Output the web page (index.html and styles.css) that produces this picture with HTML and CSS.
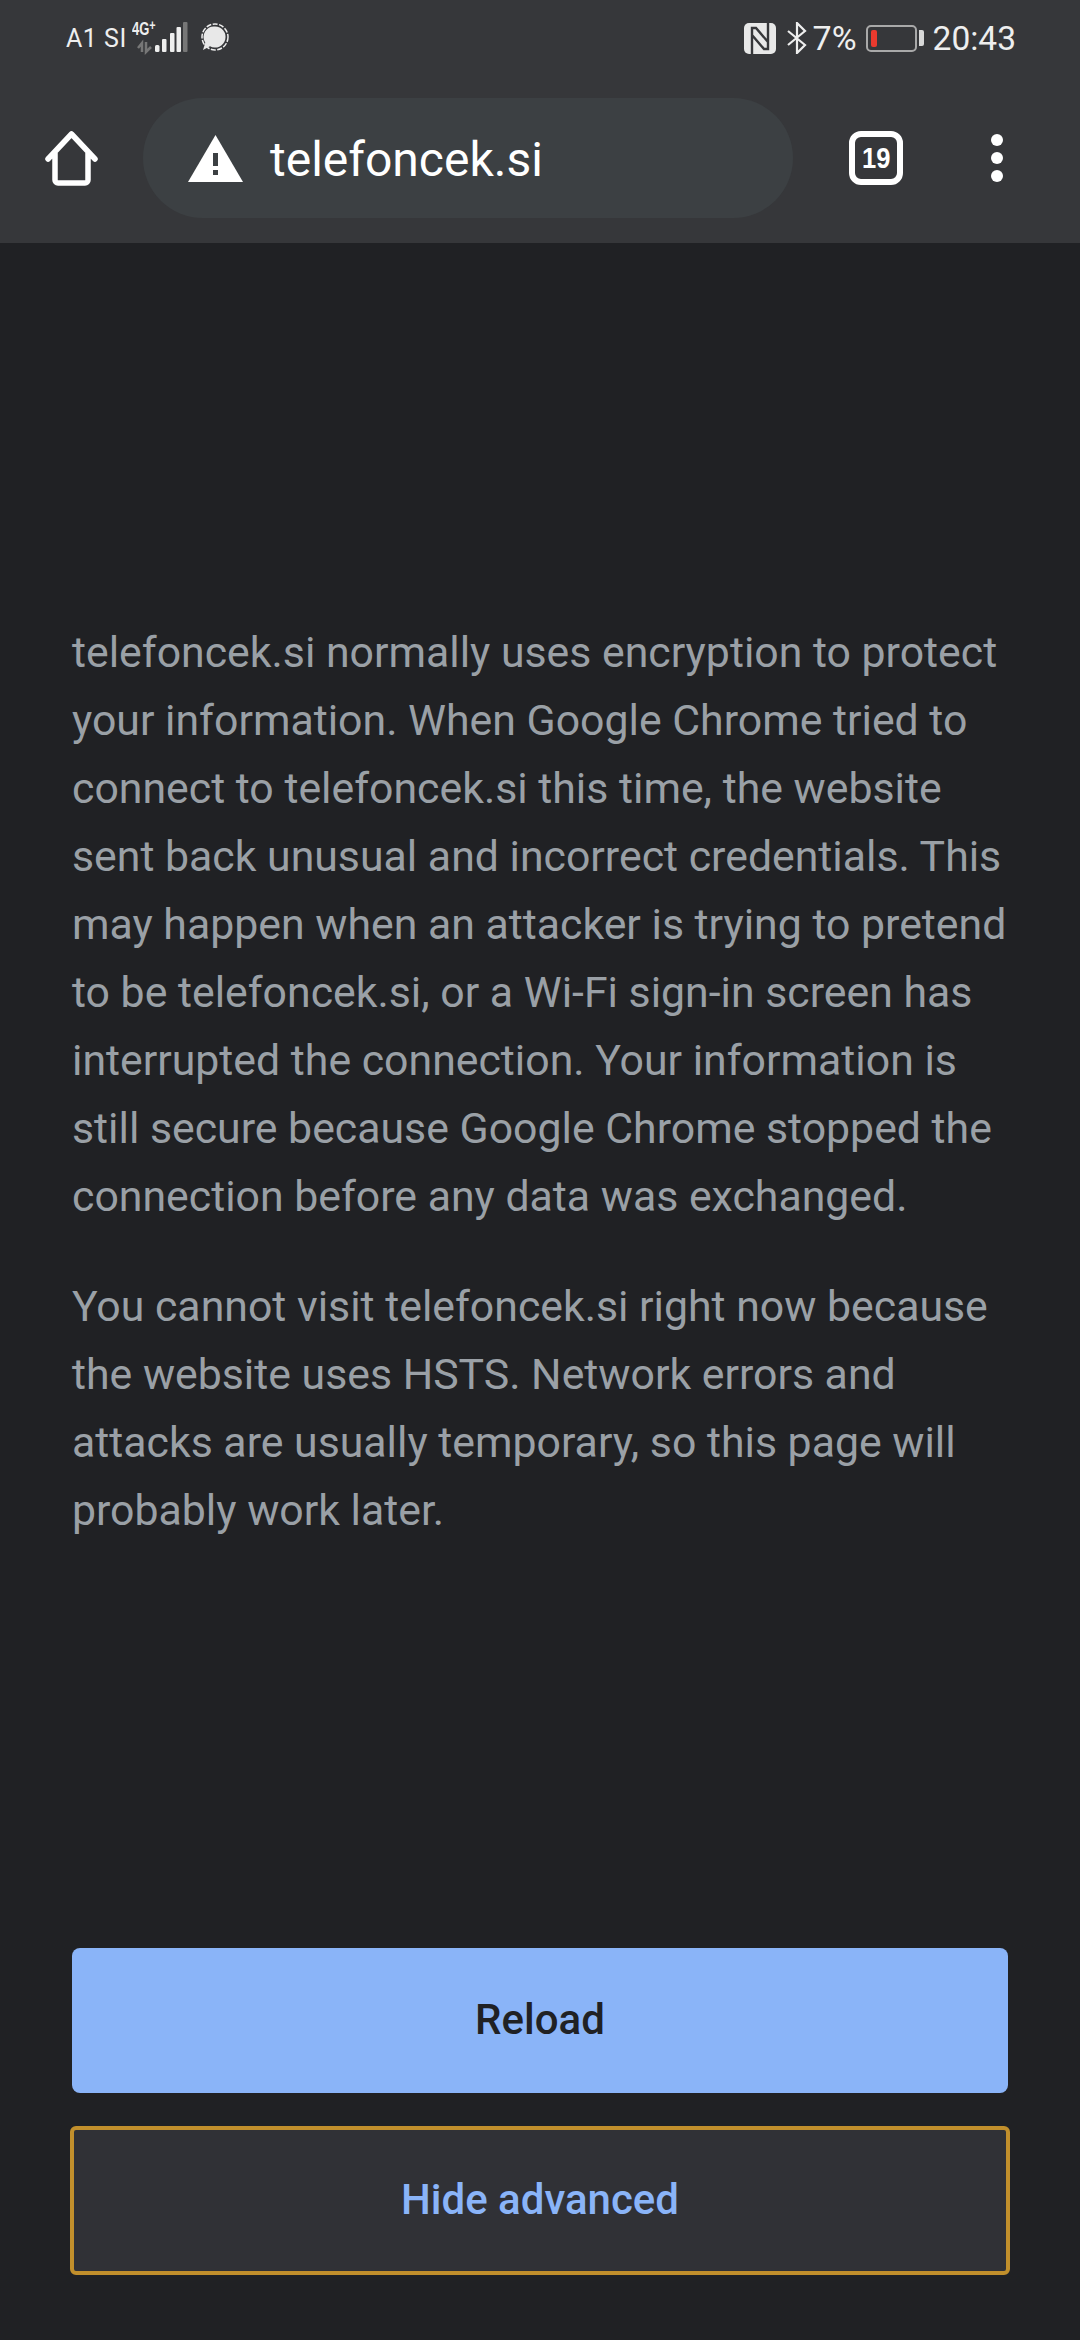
FILE: index.html
```html
<!DOCTYPE html>
<html lang="en">
<head>
    <meta charset="UTF-8">
    <meta name="viewport" content="width=device-width, initial-scale=1.0">
    <title>Privacy error</title>
    <link rel="stylesheet" href="styles.css">
</head>
<body>
    <header class="chrome">
        <div class="status-bar">
            <span class="carrier">A1 SI</span>
            <svg class="signal" width="60" height="48" viewBox="0 -4 60 48">
                <text class="net-label" transform="translate(0 17) scale(0.72 1)">4G<tspan class="net-plus" dy="-5">+</tspan></text>
                <path d="M10 34V25l-4 5M14 24v10l5-5" class="arrows"/>
                <rect x="23" y="27" width="4.500" height="7" rx="1.500" fill="#eee"/>
                <rect x="30" y="21" width="4.500" height="13" rx="1" fill="#eee"/>
                <rect x="38" y="15" width="4.500" height="19" rx="1" fill="#eee"/>
                <rect x="44.500" y="9" width="4.500" height="25" rx="1" fill="#eee"/>
                <rect x="51" y="4" width="4.500" height="30" rx="1" fill="#777"/>
            </svg>
            <svg class="chat" width="30" height="30" viewBox="0 0 30 30">
                <circle cx="15" cy="14" r="13" fill="none" stroke="#eee" stroke-width="1.500" stroke-dasharray="5 1.500"/>
                <path d="M15 3.500a10.500 10.500 0 1 1-5 19.700l-7 3.800 2.300-7.300A10.500 10.500 0 0 1 15 3.500z" fill="#e8e8e8"/>
            </svg>
            <div class="status-right">
                <svg class="nfc" width="32" height="31" viewBox="0 0 32 31">
                    <rect width="32" height="31" rx="5" fill="#e8e8e8"/>
                    <path d="M8 31V5h4l12 14M24 0v26h-4L8 12" fill="none" stroke="#36373a" stroke-width="2.400"/>
                </svg>
                <svg class="bluetooth" width="20" height="32" viewBox="0 0 20 32">
                    <path d="M1 9l17 14-8 8V1l8 8L1 23" fill="none" stroke="#eee" stroke-width="2.200"/>
                </svg>
                <span class="percent">7%</span>
                <div class="battery">
                    <div class="battery-body"><div class="battery-level"></div></div>
                    <div class="battery-nub"></div>
                </div>
                <span class="clock">20:43</span>
            </div>
        </div>
        <div class="toolbar">
            <svg class="home" width="53" height="55" viewBox="0 0 53 55">
                <path d="M3 28L26.500 3 50 28M10 22v27a3 3 0 0 0 3 3h27a3 3 0 0 0 3-3V22" fill="none" stroke="#fff" stroke-width="5.500" stroke-linecap="round" stroke-linejoin="round"/>
            </svg>
            <div class="omnibox">
                <svg class="warning" width="55" height="47" viewBox="0 0 55 47">
                    <path d="M27.500 0L55 47H0z" fill="#fff"/>
                    <path d="M25 18h5v13h-5zM25 35h5v5h-5z" fill="#3c4043"/>
                </svg>
                <span class="url">telefoncek.si</span>
            </div>
            <div class="tab-count"><span class="tab-num">19</span></div>
            <div class="menu-dots"><span></span><span></span><span></span></div>
        </div>
    </header>

    <main class="interstitial">
        <p>telefoncek.si normally uses encryption to protect your information. When Google Chrome tried to connect to telefoncek.si this time, the website sent back unusual and incorrect credentials. This may happen when an attacker is trying to pretend to be telefoncek.si, or a Wi-Fi sign-in screen has interrupted the connection. Your information is still secure because Google Chrome stopped the connection before any data was exchanged.</p>
        <p>You cannot visit telefoncek.si right now because the website uses HSTS. Network errors and attacks are usually temporary, so this page will probably work later.</p>
        <div class="actions">
            <button class="btn btn-primary">Reload</button>
            <button class="btn btn-secondary">Hide advanced</button>
        </div>
    </main>
</body>
</html>
```

FILE: styles.css
```css
* {
    box-sizing: border-box;
}

body {
    display: flex;
    flex-direction: column;
    height: 2340px;
    margin: 0;
    background-color: #202124;
    font-family: Roboto, Arial, sans-serif;
}

.chrome {
    height: 243px;
    background-color: #36373a;
}

.status-bar {
    display: flex;
    align-items: center;
    height: 76px;
    padding: 0 64px 0 66px;
    color: #eee;
}

.carrier {
    font-size: 25px;
    letter-spacing: 0.5px;
}

.signal {
    margin-left: 5px;
}

.net-label {
    font-family: "Liberation Sans", sans-serif;
    font-size: 18px;
    font-weight: 700;
    fill: #eee;
}

.net-plus {
    font-size: 15px;
}

.arrows {
    fill: none;
    stroke: #777;
    stroke-width: 2.500;
}

.chat {
    margin-left: 8px;
}

.status-right {
    display: flex;
    align-items: center;
    margin-left: auto;
}

.bluetooth {
    margin-left: 11px;
}

.percent {
    margin-left: 6px;
    font-size: 34px;
}

.battery {
    display: flex;
    align-items: center;
    margin-left: 9px;
}

.battery-body {
    width: 51px;
    height: 27px;
    padding: 3px;
    border: 2px solid #a9a9a9;
    border-radius: 5px;
}

.battery-level {
    width: 6px;
    height: 100%;
    border-radius: 2px;
    background-color: #ea3a2e;
}

.battery-nub {
    width: 5px;
    height: 16px;
    margin-left: 2px;
    border-radius: 0 2px 2px 0;
    background-color: #d8d8d8;
}

.clock {
    margin-left: 9px;
    font-size: 33.500px;
}

.toolbar {
    display: flex;
    align-items: center;
    height: 167px;
    padding: 0 0 3px 45px;
}

.omnibox {
    display: flex;
    align-items: center;
    width: 650px;
    height: 120px;
    margin-left: 45px;
    padding-left: 45px;
    border-radius: 60px;
    background-color: #3c4043;
}

.url {
    margin-left: 27px;
    padding-top: 2px;
    color: #fff;
    font-size: 48px;
}

.tab-count {
    display: flex;
    justify-content: center;
    align-items: center;
    width: 54px;
    height: 54px;
    margin-left: 56px;
    border: 6px solid #fff;
    border-radius: 12px;
    color: #fff;
    font-family: "Liberation Sans", sans-serif;
    font-size: 29px;
    font-weight: 700;
}

.tab-num {
    transform: scaleX(0.88);
}

.menu-dots {
    display: flex;
    flex-direction: column;
    gap: 6px;
    margin-left: 88px;
}

.menu-dots span {
    width: 12px;
    height: 12px;
    border-radius: 50%;
    background-color: #fff;
}

.interstitial {
    display: flex;
    flex: 1;
    flex-direction: column;
    padding: 375px 72px 67px;
    color: #9aa0a6;
    font-size: 42.800px;
    line-height: 68px;
}

.interstitial p {
    margin: 0 -6px 42px 0;
}

.actions {
    display: flex;
    flex-direction: column;
    gap: 35px;
    margin-top: auto;
}

.btn {
    height: 145px;
    padding-bottom: 4px;
    border: none;
    border-radius: 8px;
    font-family: Roboto, Arial, sans-serif;
    font-size: 42px;
    font-weight: 500;
}

.btn-primary {
    background-color: #8ab4f8;
    color: #202124;
}

.btn-secondary {
    outline: 4px solid #c18f2c;
    outline-offset: -2px;
    border-radius: 4px;
    background-color: #303136;
    color: #8ab4f8;
}
```
